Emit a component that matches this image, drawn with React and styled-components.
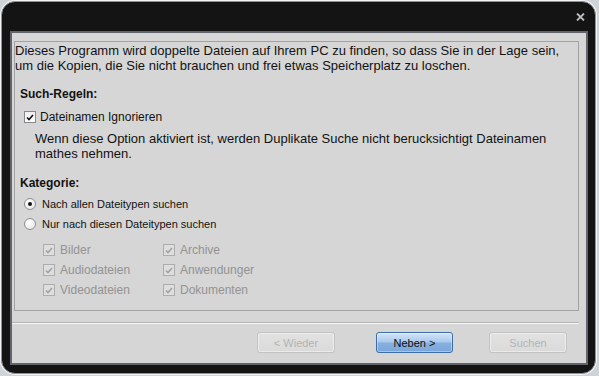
import React from "react";
import styled, { createGlobalStyle } from "styled-components";

const Global = createGlobalStyle`
  html, body { margin: 0; padding: 0; }
  body {
    background: #cfd4d9;
    font-family: "Liberation Sans", Arial, sans-serif;
    width: 599px;
    height: 376px;
    overflow: hidden;
  }
`;

const Window = styled.div`
  box-sizing: border-box;
  margin: 1px 0 0 1px;
  width: 595px;
  height: 373px;
  border-radius: 14px;
  background: #141414;
  border: 1px solid #8f9296;
  box-shadow: 0 0 0 1px #f2f4f6;
  display: flex;
  flex-direction: column;
  padding: 0 7px 8px 8px;
`;

const TitleBar = styled.div`
  height: 29px;
  display: flex;
  justify-content: flex-end;
  align-items: center;
  padding: 0 3px 0 0;
`;

const CloseIcon = styled.svg`
  display: block;
  margin-top: 1px;
`;

const Client = styled.div`
  flex: 1;
  box-sizing: border-box;
  background: #d6d6d6;
  border: 2px solid #61656b;
  display: flex;
  flex-direction: column;
`;

const Panel = styled.div`
  box-sizing: border-box;
  height: 270px;
  margin: 8px 7px 0 2px;
  border: 1px solid #a2a2a2;
  padding: 1px 0 0 0;
  color: #121212;
`;

const Intro = styled.p`
  margin: 0;
  font-size: 13px;
  line-height: 15px;
`;

const Heading = styled.div`
  margin: ${(p) => p.$top}px 0 0 5px;
  font-size: 12px;
  font-weight: bold;
  line-height: 15px;
`;

const OptionRow = styled.label`
  display: flex;
  align-items: center;
  height: 16px;
  margin: ${(p) => p.$top}px 0 0 ${(p) => p.$left}px;
  font-size: ${(p) => p.$size}px;
  color: ${(p) => (p.$disabled ? "#939393" : "#121212")};
`;

const Box = styled.span`
  box-sizing: border-box;
  width: 12px;
  height: 12px;
  flex: none;
  border: 1px solid ${(p) => (p.$disabled ? "#adadad" : "#85898d")};
  background: ${(p) => (p.$disabled ? "#dedede" : "linear-gradient(#eeeeee, #ffffff)")};
  display: flex;
  align-items: center;
  justify-content: center;
  margin-right: ${(p) => p.$gap}px;
`;

const Radio = styled.span`
  box-sizing: border-box;
  width: 12px;
  height: 12px;
  flex: none;
  border-radius: 50%;
  border: 1px solid #8b8e92;
  background: radial-gradient(circle at 40% 35%, #ffffff, #e2e2e2);
  display: flex;
  align-items: center;
  justify-content: center;
  margin: 0 6px 0 9px;
`;

const Dot = styled.span`
  width: 4px;
  height: 4px;
  border-radius: 50%;
  background: #111;
`;

const Description = styled.p`
  margin: 6px 0 0 20px;
  font-size: 13px;
  line-height: 15px;
`;

const TypeGrid = styled.div`
  display: grid;
  grid-template-columns: 120px 120px;
  row-gap: 4px;
  margin: 10px 0 0 28px;
`;

const Separator = styled.div`
  margin: 11px 7px 0 0;
  border-top: 1px solid #b4b4b4;
  border-bottom: 1px solid #f6f6f6;
`;

const ButtonRow = styled.div`
  display: flex;
  justify-content: flex-end;
  padding: 8px 19px 0 0;
`;

const Button = styled.button`
  box-sizing: border-box;
  width: ${(p) => p.$w}px;
  height: 21px;
  margin-right: ${(p) => p.$mr}px;
  font-family: "Liberation Sans", Arial, sans-serif;
  font-size: 11px;
  border-radius: 3px;
  padding: 0;
  color: ${(p) => (p.$primary ? "#0d0d0d" : "#b3b3b3")};
  border: 1px solid ${(p) => (p.$primary ? "#3c6ea6" : "#c3c3c3")};
  background: ${(p) =>
    p.$primary
      ? "linear-gradient(#d4e5f8 0%, #a9c8ec 48%, #86b0e0 52%, #7aa6da 100%)"
      : "linear-gradient(#e2e2e2, #dadada)"};
  box-shadow: inset 0 0 0 1px ${(p) => (p.$primary ? "rgba(255,255,255,0.35)" : "rgba(255,255,255,0.45)")};
`;

const Check = ({ color }) => (
  <svg width="8" height="7" viewBox="0 0 8 7">
    <path d="M1 3.5 L3 5.5 L7 1" fill="none" stroke={color} strokeWidth="1.6" />
  </svg>
);

const TypeOption = ({ label }) => (
  <OptionRow $top={0} $left={0} $size={12} $disabled>
    <Box $disabled $gap={5}>
      <Check color="#a3a3a3" />
    </Box>
    {label}
  </OptionRow>
);

export default function App() {
  return (
    <>
      <Global />
      <Window>
        <TitleBar>
          <CloseIcon width="9" height="8" viewBox="0 0 9 8">
            <path d="M1 0.5 L8 7.5 M8 0.5 L1 7.5" stroke="#bdbdbd" strokeWidth="1.8" />
          </CloseIcon>
        </TitleBar>
        <Client>
          <Panel>
            <Intro>
              Dieses Programm wird doppelte Dateien auf Ihrem PC zu finden, so dass Sie in der Lage sein,
              <br />
              um die Kopien, die Sie nicht brauchen und frei etwas Speicherplatz zu loschen.
            </Intro>
            <Heading $top={14}>Such-Regeln:</Heading>
            <OptionRow $top={7} $left={9} $size={12}>
              <Box $gap={4}>
                <Check color="#111" />
              </Box>
              Dateinamen Ignorieren
            </OptionRow>
            <Description>
              Wenn diese Option aktiviert ist, werden Duplikate Suche nicht berucksichtigt Dateinamen
              <br />
              mathes nehmen.
            </Description>
            <Heading $top={15}>Kategorie:</Heading>
            <OptionRow $top={5} $left={0} $size={11}>
              <Radio>
                <Dot />
              </Radio>
              Nach allen Dateitypen suchen
            </OptionRow>
            <OptionRow $top={4} $left={0} $size={11}>
              <Radio />
              Nur nach diesen Dateitypen suchen
            </OptionRow>
            <TypeGrid>
              <TypeOption label="Bilder" />
              <TypeOption label="Archive" />
              <TypeOption label="Audiodateien" />
              <TypeOption label="Anwendunger" />
              <TypeOption label="Videodateien" />
              <TypeOption label="Dokumenten" />
            </TypeGrid>
          </Panel>
          <Separator />
          <ButtonRow>
            <Button $w={78} $mr={41} disabled>
              &lt; Wieder
            </Button>
            <Button $w={77} $mr={36} $primary>
              Neben &gt;
            </Button>
            <Button $w={78} $mr={0} disabled>
              Suchen
            </Button>
          </ButtonRow>
        </Client>
      </Window>
    </>
  );
}
